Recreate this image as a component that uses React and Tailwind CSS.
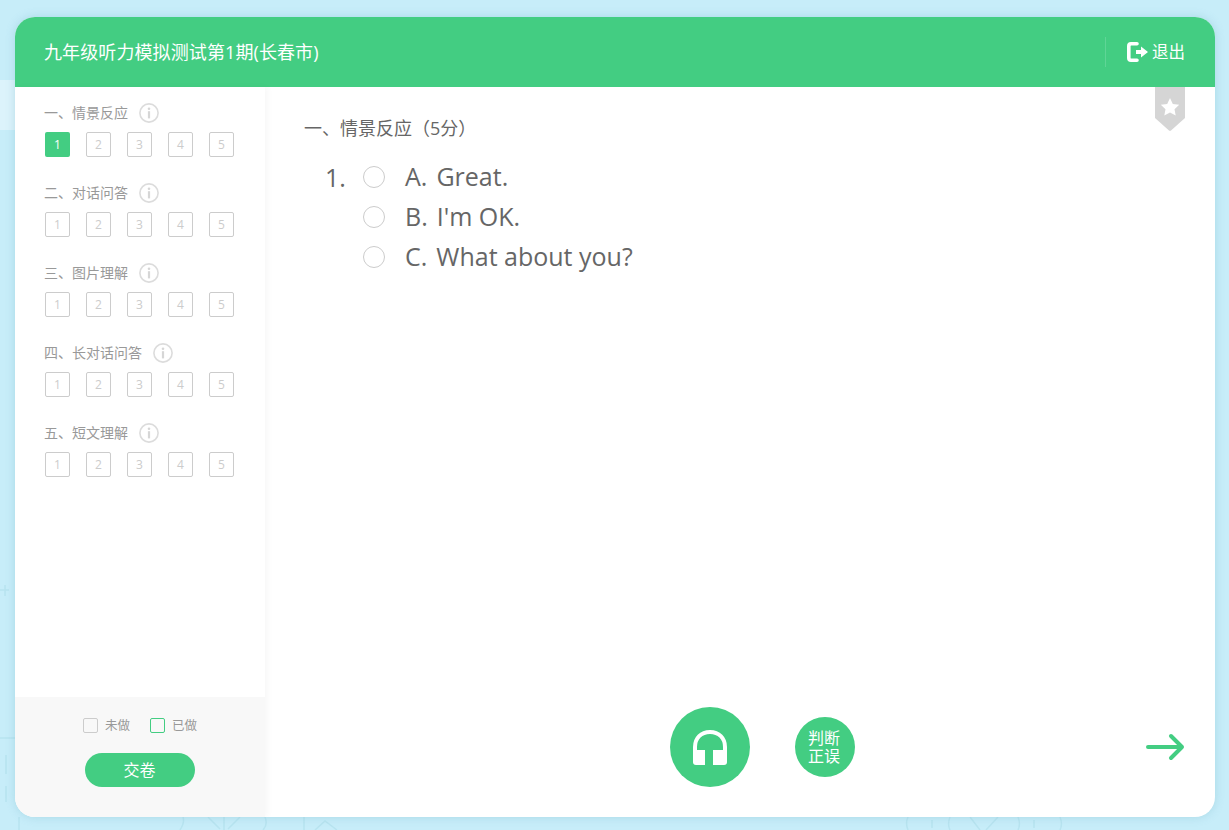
const sections = ['一、情景反应', '二、对话问答', '三、图片理解', '四、长对话问答', '五、短文理解'];

const options = [
  { letter: 'A.', text: 'Great.' },
  { letter: 'B.', text: "I'm OK." },
  { letter: 'C.', text: 'What about you?' },
];

const InfoIcon = () => (
  <svg width="20" height="20" viewBox="0 0 20 20" fill="none" className="shrink-0">
    <circle cx="10" cy="10" r="9.100" stroke="#dcdcdc" strokeWidth="1.600" />
    <circle cx="10" cy="5.800" r="1.300" fill="#d6d6d6" />
    <rect x="8.900" y="8.200" width="2.200" height="7.200" fill="#d6d6d6" />
  </svg>
);

const ExitIcon = () => (
  <svg width="21" height="20" viewBox="0 0 21 20" fill="none">
    <path d="M10 1.800H4C2.700 1.800 1.800 2.700 1.800 4v12c0 1.300.9 2.200 2.200 2.200h6" stroke="#fff" strokeWidth="3.600" strokeLinecap="round" />
    <path d="M9 8h5V4.500l7 5.500-7 5.500V12H9z" fill="#fff" />
  </svg>
);

const Headphones = () => (
  <svg width="34" height="35" viewBox="0 0 34 35" fill="none">
    <path d="M2 22V17C2 8 8 2 17 2s15 6 15 15v5" stroke="#fff" strokeWidth="4" />
    <path d="M0 20h12v15H3c-2 0-3-1-3-3zM20 20h14v12c0 2-1 3-3 3H20z" fill="#fff" />
  </svg>
);

const Background = () => (
  <svg className="absolute inset-0" width="1229" height="830" fill="none" stroke="#b8e4f0" strokeWidth="1.500">
    <rect x="0" y="80" width="15" height="50" fill="#dcf3fb" stroke="none" />
    <path d="M0 590h9M5 585v11M0 738h15M6 755v19M6 786v16" />
    <path d="M19 817v13M180 830c4-6 4-10 3-13M265 817c2 5 2 9-2 13M208 817l12 12M240 817l-12 12M224 817v13" />
    <path d="M304 817v13M315 830l10-9 12 9" />
    <path d="M908 830c-2-5-2-9 0-13M950 817c-2 5-2 9 0 13M1018 817c2 5 2 9 0 13M1060 817c2 5 2 9 0 13M980 830l-10-13M986 830l12-13M932 820v8M1034 820v8" />
  </svg>
);

const App = () => {
  return (
    <div className="relative h-screen w-full overflow-hidden bg-[#c7edf9] pl-[15px] pt-[17px] font-['Open_Sans','Noto_Sans_CJK_SC',sans-serif]">
      <Background />
      <div className="relative flex h-[800px] w-[1200px] flex-col overflow-hidden rounded-[20px] bg-white shadow-[0_0_10px_rgba(100,170,190,0.3)]">
        {/* Header */}
        <div className="flex h-[70px] shrink-0 items-center justify-between bg-[#43cd82] pl-[29px] pr-[30px] text-white">
          <h1 className="text-[18px] font-normal tracking-[0.1px]">九年级听力模拟测试第1期(长春市)</h1>
          <div className="flex items-center">
            <div className="mr-[21px] h-[30px] w-px bg-[#5fd596]" />
            <ExitIcon />
            <span className="ml-[4px] text-[16.500px]">退出</span>
          </div>
        </div>

        <div className="flex min-h-0 flex-1">
          {/* Sidebar */}
          <div className="z-10 flex w-[250px] shrink-0 flex-col shadow-[3px_0_6px_rgba(0,0,0,0.03)]">
            <div className="flex flex-1 flex-col gap-[20px] pl-[29px] pt-[16px]">
              {sections.map((title, i) => (
                <div key={title} className="h-[60px]">
                  <div className="flex h-[20px] items-center text-[14px] text-[#999]">
                    <span className="mb-[2px]">{title}</span>
                    <span className="ml-[11px]">
                      <InfoIcon />
                    </span>
                  </div>
                  <div className="ml-[1px] mt-[9px] flex gap-[16px]">
                    {[1, 2, 3, 4, 5].map((n) => {
                      const active = i === 0 && n === 1;
                      return (
                        <div
                          key={n}
                          className={
                            active
                              ? 'flex size-[25px] items-center justify-center rounded-[2px] bg-[#43cd82] text-[12px] text-white'
                              : 'flex size-[25px] items-center justify-center rounded-[2px] border border-[#ccc] text-[12px] text-[#ccc]'
                          }
                        >
                          {n}
                        </div>
                      );
                    })}
                  </div>
                </div>
              ))}
            </div>

            <div className="flex h-[120px] shrink-0 flex-col items-center bg-[#f8f8f8] pt-[21px]">
              <div className="flex h-[15px] items-center text-[12.500px] text-[#999]">
                <span className="size-[15px] rounded-[2px] border border-[#ccc]" />
                <span className="ml-[7px] mt-[2px]">未做</span>
                <span className="ml-[20px] size-[15px] rounded-[2px] border border-[#43cd82]" />
                <span className="ml-[7px] mt-[2px]">已做</span>
              </div>
              <button className="mt-[20px] h-[34px] w-[110px] rounded-full bg-[#43cd82] pr-[1px] text-[16px] text-white">交卷</button>
            </div>
          </div>

          {/* Main */}
          <div className="relative flex min-w-0 flex-1 flex-col">
            <svg className="absolute right-[30px] top-0" width="30" height="44" viewBox="0 0 30 44">
              <path d="M0 0h30v31L16 43.500c-.6.500-1.400.500-2 0L0 31z" fill="#d5d5d5" />
              <path d="M15 11l2.800 6 6.400.8-4.700 4.400 1.200 6.400-5.700-3.200-5.700 3.200 1.200-6.400-4.700-4.400 6.400-.8z" fill="#fff" />
            </svg>

            <div className="pl-[39px] pt-[28px]">
              <h2 className="h-[26px] text-[18px] font-normal leading-[26px] text-[#666]">一、情景反应（5分）</h2>
              <div className="mt-[16px] flex pl-[21px] text-[25px] text-[#666]">
                <span className="w-[38px] leading-[40px]">1.</span>
                <div className="flex flex-col">
                  {options.map((o) => (
                    <div key={o.letter} className="flex h-[40px] items-center">
                      <span className="size-[22px] rounded-full border border-[#ccc]" />
                      <span className="ml-[20px]">{o.letter}</span>
                      <span className="ml-[9px]">{o.text}</span>
                    </div>
                  ))}
                </div>
              </div>
            </div>

            <div className="mt-auto flex h-[110px] items-start pl-[405px] pr-[30px]">
              <div className="flex size-[80px] items-center justify-center rounded-full bg-[#43cd82]">
                <Headphones />
              </div>
              <div className="ml-[45px] mt-[10px] flex size-[60px] items-center justify-center rounded-full bg-[#43cd82] pr-[2px] text-center text-[16px] leading-[18px] text-white">
                判断<br />正误
              </div>
              <svg className="ml-auto mt-[23px]" width="40" height="34" viewBox="0 0 40 34" fill="none" stroke="#43cd82" strokeWidth="4" strokeLinecap="round" strokeLinejoin="round">
                <path d="M3 17h34M26 6l11 11-11 11" />
              </svg>
            </div>
          </div>
        </div>
      </div>
    </div>
  );
};

export default App;
